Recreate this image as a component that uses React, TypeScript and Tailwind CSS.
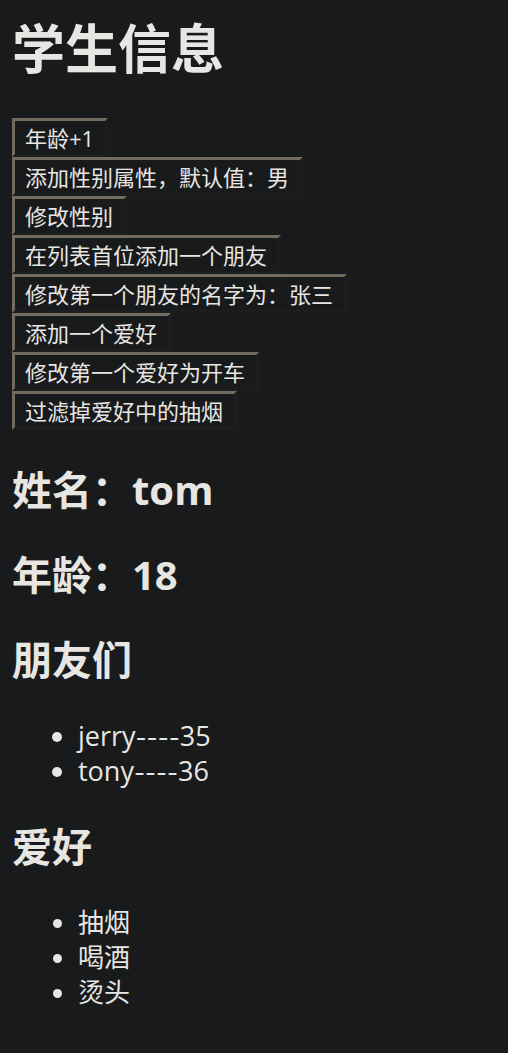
import { useState } from "react";

type Friend = { name: string; age: number };
type Student = { name: string; age: number; sex?: string; friends: Friend[]; hobby: string[] };

const headingClass = "text-[40px] leading-[53px] font-bold";

function ActionButton({ label, onClick }: { label: string; onClick: () => void }) {
  return (
    <button
      type="button"
      onClick={onClick}
      className="h-[39px] border-[3px] border-t-[#736b5e] border-l-[#736b5e] border-r-[#1b1d1e] border-b-[#1b1d1e] bg-[#181a1b] pr-[11px] pl-2.5 text-[22px] leading-8 whitespace-nowrap"
    >
      {label}
    </button>
  );
}

export default function App() {
  const [student, setStudent] = useState<Student>({
    name: "tom",
    age: 18,
    friends: [
      { name: "jerry", age: 35 },
      { name: "tony", age: 36 },
    ],
    hobby: ["抽烟", "喝酒", "烫头"],
  });
  const update = (change: (s: Student) => Partial<Student>) =>
    setStudent((s) => ({ ...s, ...change(s) }));

  const actions = [
    { label: "年龄+1", run: () => update((s) => ({ age: s.age + 1 })) },
    { label: "添加性别属性，默认值：男", run: () => update(() => ({ sex: "男" })) },
    { label: "修改性别", run: () => update((s) => ({ sex: s.sex === "男" ? "女" : "男" })) },
    { label: "在列表首位添加一个朋友", run: () => update((s) => ({ friends: [{ name: "jack", age: 70 }, ...s.friends] })) },
    { label: "修改第一个朋友的名字为：张三", run: () => update((s) => ({ friends: s.friends.map((f, i) => (i === 0 ? { ...f, name: "张三" } : f)) })) },
    { label: "添加一个爱好", run: () => update((s) => ({ hobby: [...s.hobby, "学习"] })) },
    { label: "修改第一个爱好为开车", run: () => update((s) => ({ hobby: s.hobby.map((h, i) => (i === 0 ? "开车" : h)) })) },
    { label: "过滤掉爱好中的抽烟", run: () => update((s) => ({ hobby: s.hobby.filter((h) => h !== "抽烟") })) },
  ];

  return (
    <main className="min-h-screen bg-[#181a1b] px-3 pt-[13px] pb-10 font-['Open_Sans','Noto_Sans_CJK_SC',sans-serif] text-[#e8e6e3]">
      <h1 className="text-[53px] leading-[72px] font-bold">学生信息</h1>
      <div className="mt-[33px] flex flex-col items-start">
        {actions.map((a) => (
          <ActionButton key={a.label} label={a.label} onClick={a.run} />
        ))}
      </div>
      <div className="mt-[33px] flex flex-col gap-8">
        <h2 className={headingClass}>姓名：{student.name}</h2>
        {student.sex && <h2 className={headingClass}>性别：{student.sex}</h2>}
        <h2 className={headingClass}>年龄：{student.age}</h2>
        <h2 className={headingClass}>朋友们</h2>
      </div>
      <ul className="mt-8 list-disc pl-[66px] text-[27px] leading-[35px]">
        {student.friends.map((f, i) => (
          <li key={i}>
            {f.name}
            <span className="font-['Inter',sans-serif] text-2xl leading-none">----</span>
            {f.age}
          </li>
        ))}
      </ul>
      <h2 className={`mt-8 ${headingClass}`}>爱好</h2>
      <ul className="mt-8 list-disc pl-[66px] text-[26px] leading-[35px]">
        {student.hobby.map((h, i) => (
          <li key={i}>{h}</li>
        ))}
      </ul>
    </main>
  );
}
